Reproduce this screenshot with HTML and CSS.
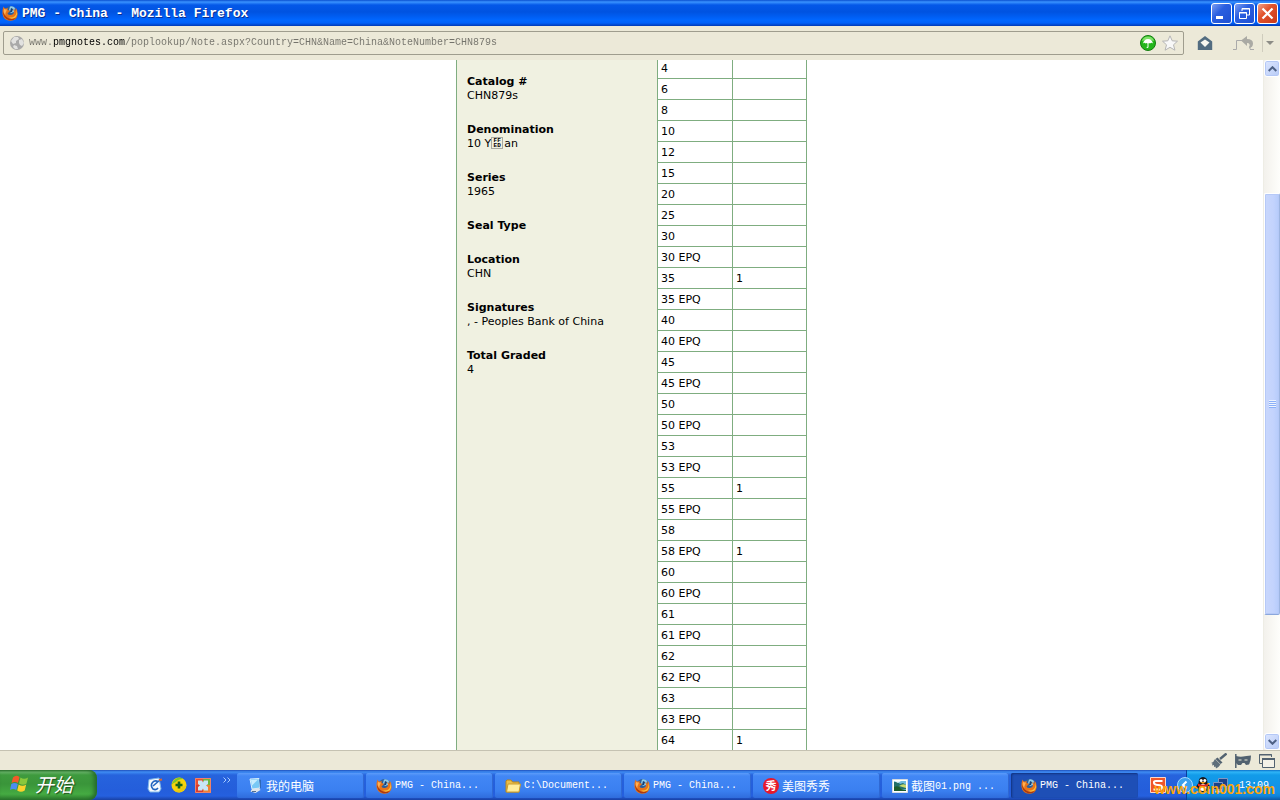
FILE: index.html
```html
<!DOCTYPE html>
<html lang="en">

<head>
    <meta charset="utf-8">
    <title>PMG - China - Mozilla Firefox</title>
    <link rel="stylesheet" href="styles.css">
</head>

<body>
<svg class="sprite" width="0" height="0" aria-hidden="true">
    <symbol id="firefox" viewBox="0 0 16 16">
        <circle cx="8.500" cy="7.500" r="6.500" fill="#2a5f9e"/>
        <path d="M8 1.500q3-1 5 1.500l-1 4-3 1-2-3z" fill="#8ecbe8"/>
        <path d="M9 3l2 1-1 3-2 0z" fill="#163e74"/>
        <path d="M1.500 1.500Q2 3 3 3.500L6 3.200 5.500 4.800 8 6 6.500 7.500 5.500 8.500Q6.500 10.500 9 10Q12 9.500 12 6.500L11 4Q13 5 13.500 6L13.500 2.500Q16 5 15.700 9Q15 15.500 8.500 15.800Q1.500 15.500.500 9Q0 5 1.500 1.500z" fill="#e8741a"/>
        <path d="M14 4Q15.500 8 13 11Q10 13.500 6.500 12Q10 15 13.500 12.500Q16.500 9 14 4z" fill="#fbc43a"/>
        <path d="M1 6Q.500 13 7 15.200Q12 16 14.500 12.500Q10 15 6 13Q2 11 1 6z" fill="#a93a12"/>
        <path d="M2 4Q3.500 4.500 5 4.500L4 7Q3 8 3.500 10Q1 8 2 4z" fill="#ffb052"/>
    </symbol>
</svg>

<header class="titlebar">
    <svg class="icon" viewBox="0 0 16 16"><use href="#firefox"/></svg>
    <h1>PMG - China - Mozilla Firefox</h1>
    <div class="window-buttons">
        <button type="button" aria-label="Minimize">
            <svg viewBox="0 0 19 19"><path d="M4 12h7v3H4z" fill="#fff"/></svg>
        </button>
        <button type="button" aria-label="Restore">
            <svg viewBox="0 0 19 19" fill="none" stroke="#fff"><path d="M7 7V4.500h7.500V11H12M7 5h8" /><path d="M4.500 8.500h7v6h-7zM4 9h8"/></svg>
        </button>
        <button type="button" class="close" aria-label="Close">
            <svg viewBox="0 0 19 19"><path d="M4.500 4.500l10 10m0-10l-10 10" stroke="#fff" stroke-width="2.200"/></svg>
        </button>
    </div>
</header>

<nav class="toolbar">
    <div class="address">
        <svg class="icon" viewBox="0 0 16 16">
            <circle cx="8" cy="8" r="7" fill="#a9a9a9"/>
            <path d="M2 6l3-4 4 0 1 2-3 2 0 2-3 1zM10 5l3-1 2 4-2 3-2-1-1-2zM5 10l3 1 1 3-3 0-2-2z" fill="#e2e2e0"/>
        </svg>
        <input class="url" type="text" aria-label="Address" value="www.pmgnotes.com/poplookup/Note.aspx?Country=CHN&amp;Name=China&amp;NoteNumber=CHN879s">
        <button type="button" class="plain" aria-label="Page helper">
            <svg class="icon" viewBox="0 0 16 16">
                <circle cx="8" cy="8" r="7.500" fill="#24b51c" stroke="#147d10"/>
                <path d="M2 6Q3 1.500 8 1.500T14 6Q8 4 2 6z" fill="#7fe268"/>
                <path d="M3 8.500Q4 4 8 4T13 8.500Q11.500 7 10 8.500Q9 7.500 8.500 8.500V12q-.500 1.500-2 .500v-.800q1 .500 1-.200V8.500Q6.500 7.500 5.500 8.500Q4.500 7 3 8.500z" fill="#fff"/>
            </svg>
        </button>
        <button type="button" class="plain" aria-label="Bookmark this page">
            <svg class="icon" viewBox="0 0 16 16"><path d="M8 .800l2.200 5 5.300.400-4 3.600 1.400 5.400L8 12.300l-4.900 2.900 1.400-5.400-4-3.600 5.300-.400z" fill="#f8f8f8" stroke="#b5b5b5"/></svg>
        </button>
    </div>
    <button type="button" class="plain home" aria-label="Home">
        <svg class="icon" viewBox="0 0 16 16"><path d="M8 1L.800 6.500V15h14.400V6.500z" fill="#526c80"/><path d="M3.500 7.500L8 4.500l4.500 3L8 12z" fill="#f8f7f0"/></svg>
    </button>
    <button type="button" class="plain undo" aria-label="Undo close tab">
        <svg width="22" height="16" viewBox="0 0 22 16"><path d="M0 14.500h3.500v-9H10M17 14.500h4M17 11v3" fill="none" stroke="#aaa"/><path d="M8 5.500l6-4.500v3q6 0 6 4.500 0 4-4 4.500 2-5-2-5v3z" fill="#aaaaa4"/></svg>
    </button>
    <button type="button" class="plain drop" aria-label="Recently closed">
        <svg width="8" height="4" viewBox="0 0 8 4"><path d="M0 0h8L4 4z" fill="#8c8c86"/></svg>
    </button>
</nav>

<main class="view">
    <div class="page">
        <div class="note">
            <dl class="details">
                <div>
                    <dt>Catalog #</dt>
                    <dd>CHN879s</dd>
                </div>
                <div>
                    <dt>Denomination</dt>
                    <dd>10 Y<span class="hexbox">FF<br>ED</span>an</dd>
                </div>
                <div>
                    <dt>Series</dt>
                    <dd>1965</dd>
                </div>
                <div>
                    <dt>Seal Type</dt>
                    <dd></dd>
                </div>
                <div>
                    <dt>Location</dt>
                    <dd>CHN</dd>
                </div>
                <div>
                    <dt>Signatures</dt>
                    <dd>, - Peoples Bank of China</dd>
                </div>
                <div>
                    <dt>Total Graded</dt>
                    <dd>4</dd>
                </div>
            </dl>
            <table class="grades">
                <tr><td>4</td><td></td></tr>
                <tr><td>6</td><td></td></tr>
                <tr><td>8</td><td></td></tr>
                <tr><td>10</td><td></td></tr>
                <tr><td>12</td><td></td></tr>
                <tr><td>15</td><td></td></tr>
                <tr><td>20</td><td></td></tr>
                <tr><td>25</td><td></td></tr>
                <tr><td>30</td><td></td></tr>
                <tr><td>30 EPQ</td><td></td></tr>
                <tr><td>35</td><td>1</td></tr>
                <tr><td>35 EPQ</td><td></td></tr>
                <tr><td>40</td><td></td></tr>
                <tr><td>40 EPQ</td><td></td></tr>
                <tr><td>45</td><td></td></tr>
                <tr><td>45 EPQ</td><td></td></tr>
                <tr><td>50</td><td></td></tr>
                <tr><td>50 EPQ</td><td></td></tr>
                <tr><td>53</td><td></td></tr>
                <tr><td>53 EPQ</td><td></td></tr>
                <tr><td>55</td><td>1</td></tr>
                <tr><td>55 EPQ</td><td></td></tr>
                <tr><td>58</td><td></td></tr>
                <tr><td>58 EPQ</td><td>1</td></tr>
                <tr><td>60</td><td></td></tr>
                <tr><td>60 EPQ</td><td></td></tr>
                <tr><td>61</td><td></td></tr>
                <tr><td>61 EPQ</td><td></td></tr>
                <tr><td>62</td><td></td></tr>
                <tr><td>62 EPQ</td><td></td></tr>
                <tr><td>63</td><td></td></tr>
                <tr><td>63 EPQ</td><td></td></tr>
                <tr><td>64</td><td>1</td></tr>
            </table>
        </div>
    </div>
    <div class="scrollbar">
        <button type="button" aria-label="Scroll up">
            <svg width="9" height="6" viewBox="0 0 9 6"><path d="M.700 5l3.800-3.800L8.300 5" fill="none" stroke="#4d6185" stroke-width="2"/></svg>
        </button>
        <div class="track">
            <div class="thumb"><span class="grip"></span></div>
        </div>
        <button type="button" aria-label="Scroll down">
            <svg width="9" height="6" viewBox="0 0 9 6"><path d="M.700 1l3.800 3.800L8.300 1" fill="none" stroke="#4d6185" stroke-width="2"/></svg>
        </button>
    </div>
</main>

<div class="addonbar">
    <button type="button" class="plain" aria-label="Clean up">
        <svg class="icon" viewBox="0 0 16 16"><path d="M15.500.500L9 6" stroke="#526270" stroke-width="2.400"/><path d="M6.500 4.500l5 5-2 1.500-5-5z" fill="#526270"/><path d="M4 6l5.500 5.500Q8 14 5 15.500L4.500 13.500 3 14v-2l-2 .500.500-2L0 10Q3 9 4 6z" fill="#5f6f7b"/></svg>
    </button>
    <button type="button" class="plain" aria-label="Private browsing">
        <svg class="icon" viewBox="0 0 16 16"><path d="M.800 1v14" stroke="#526270" stroke-width="1.500"/><path d="M1 3q4 1 7 .500T16 2.500Q16 8 14 11.500L11 12 9.500 10H7.500L6 12H3L1 10z" fill="#526270"/><path d="M3.500 6.500h3v1h-3zM9.500 6.500h3v1h-3z" fill="#ece9d8"/></svg>
    </button>
    <button type="button" class="plain" aria-label="Windows">
        <svg class="icon" viewBox="0 0 16 16" fill="none" stroke="#526270"><path d="M3 10.500H.500v-9h12V4M0 2h13"/><path d="M3.500 5.500h12v9h-12z" fill="#f4f2e8"/><path d="M3 6h13" stroke-width="2"/></svg>
    </button>
</div>

<footer class="taskbar">
    <button type="button" class="start">
        <svg width="20" height="18" viewBox="0 0 20 18">
            <path d="M3 2.500Q6-.500 9.500 2L8 8Q5 6 1.500 8z" fill="#f25a29"/>
            <path d="M10.500 2.500Q14 5 18 2.500L16.500 8.500Q13 11 9 8.500z" fill="#8ac83c"/>
            <path d="M1.300 9Q4.500 7 7.800 9L6.300 15Q3 13 0 15z" fill="#4c8df0"/>
            <path d="M8.700 9.500Q12.500 12 16.200 9.500L14.700 15.500Q11 18 7.200 15.500z" fill="#fcd22c"/>
        </svg>
        <span>开始</span>
    </button>
    <div class="quick">
        <button type="button" class="plain" aria-label="Show desktop">
            <svg class="icon" viewBox="0 0 16 16"><path d="M2 2.500l10-1.500 2 11-2 3H3L1 12z" fill="#f6fbff" stroke="#7fb6e8"/><path d="M11.500 5Q8 2.500 5.500 5.500T6 12q3 1.500 5-1M6 9l7-6" fill="none" stroke="#2467c0" stroke-width="1.600"/><path d="M12 3l3-.500" stroke="#d46a35" stroke-width="2"/></svg>
        </button>
        <button type="button" class="plain" aria-label="360">
            <svg class="icon" viewBox="0 0 16 16"><circle cx="8" cy="8" r="7.500" fill="#f8d30b"/><path d="M.500 8Q2 2 8 .500 11 .500 12 2 7 2 5 5 2 6 .500 8z" fill="#7cc62c"/><path d="M15.500 8q-2 6-7 7.500-4 0-6-2.500 6 2 9-3z" fill="#e9c80f"/><path d="M8 4.500v7M4.500 8h7" stroke="#17631a" stroke-width="2.600"/></svg>
        </button>
        <button type="button" class="plain" aria-label="Picture viewer">
            <svg class="icon" viewBox="0 0 16 16"><path d="M0 1h8v7H0z" fill="#e84e32"/><path d="M8 1h8v7H8z" fill="#6cb83c"/><path d="M0 8h8v8H0z" fill="#d83d30"/><path d="M8 8h8v8H8z" fill="#ee8133"/><path d="M3 3.500h4l1 2 1-2h4V7L11 8.500l2 1.500v3.500H9l-1-2-1 2H3V10l2-1.500L3 7z" fill="#c9e6f6"/><path d="M.500 1.500h15v14H.500z" fill="none" stroke="#f0826a"/></svg>
        </button>
        <button type="button" class="plain more" aria-label="More">
            <svg width="8" height="6" viewBox="0 0 8 6" fill="none" stroke="#a9ccff"><path d="M.500.500L3 3 .500 5.500M4.500.500L7 3 4.500 5.500"/></svg>
        </button>
    </div>
    <div class="tasks">
        <button type="button" class="task">
            <svg class="icon" viewBox="0 0 16 16"><path d="M3 1l9-.500 1 9.500-8 1z" fill="#78c8f5" stroke="#d9effb"/><path d="M4 2l7-.500-6 6z" fill="#c7ecff"/><path d="M5 11l7-1 1.500 2-5 3-5-1.500z" fill="#dfe4ea"/><path d="M12 1l2 1 0 8-1 0z" fill="#2f68b5"/><path d="M5 13.500h4" stroke="#536e91"/></svg>
            <span class="cjk">我的电脑</span>
        </button>
        <button type="button" class="task">
            <svg class="icon" viewBox="0 0 16 16"><use href="#firefox"/></svg>
            <span>PMG - China...</span>
        </button>
        <button type="button" class="task">
            <svg class="icon" viewBox="0 0 16 16"><path d="M1 14V3l1-1h4l1.500 2H14v10z" fill="#e9bd48" stroke="#b98518"/><path d="M1.500 14L3 6h12.500L14 14z" fill="#ffed9c" stroke="#c99c2e"/></svg>
            <span>C:\Document...</span>
        </button>
        <button type="button" class="task">
            <svg class="icon" viewBox="0 0 16 16"><use href="#firefox"/></svg>
            <span>PMG - China...</span>
        </button>
        <button type="button" class="task">
            <span class="xiu">秀</span>
            <span class="cjk">美图秀秀</span>
        </button>
        <button type="button" class="task">
            <svg class="icon" viewBox="0 0 16 16"><path d="M.500 1.500h15v13H.500z" fill="#fff" stroke="#d6dce2"/><path d="M2 3h12v10H2z" fill="#70bbdf"/><path d="M2 4q4-1 6 2l3-1 3 2v4H2z" fill="#226f69"/><path d="M7 8q4-3 7-1v3z" fill="#c8d86e"/><path d="M2 9q5-2 7 2l5 1v1H2z" fill="#1c5c2b"/><path d="M2 3h7L6 5z" fill="#e6f6fb"/></svg>
            <span><span class="cjk">截图</span>01.png ...</span>
        </button>
        <button type="button" class="task active">
            <svg class="icon" viewBox="0 0 16 16"><use href="#firefox"/></svg>
            <span>PMG - China...</span>
        </button>
    </div>
    <div class="language">
        <svg class="icon" viewBox="0 0 16 16"><path d="M.500.500h15v15H.500z" fill="#f0562a" stroke="#fcd7c8"/><path d="M12.500 4H6Q3.500 4 4 6t4 2 4 2-2 2.500H3.500" fill="none" stroke="#fff" stroke-width="2"/></svg>
    </div>
    <div class="tray">
        <button type="button" class="plain expand" aria-label="Show hidden icons">
            <svg class="icon" viewBox="0 0 16 16"><circle cx="8" cy="8" r="7.500" fill="#3ba0ee" stroke="#a6daff"/><path d="M9.500 4.500L6 8l3.500 3.500" fill="none" stroke="#fff" stroke-width="2"/></svg>
        </button>
        <svg class="icon" viewBox="0 0 16 16"><path d="M3.500 6Q3.500 0 8 0t4.500 6q3.500 4 2.500 6l-2.500-1q0 4-4.500 4t-4.500-4L1 12q-1-2 2.500-6z" fill="#17191d"/><ellipse cx="8" cy="10.500" rx="3.500" ry="3.500" fill="#fff"/><circle cx="6.200" cy="3.500" r="1.500" fill="#fff"/><circle cx="9.800" cy="3.500" r="1.500" fill="#fff"/><path d="M5 5h6L8 7z" fill="#f6a21a"/><path d="M3 6.500q5 2.500 10 0V9q-5 2-10 0z" fill="#e32a20"/><path d="M2.500 15.500q2-2.500 5 0zM8.500 15.500q2.500-2.500 5 0z" fill="#f6a21a"/></svg>
        <svg class="icon" viewBox="0 0 16 16"><path d="M5.500 1.500h9v8h-9z" fill="#1d4187" stroke="#7f97c4"/><path d="M.500 5.500h9v7h-9z" fill="#1d4187" stroke="#7f97c4"/><path d="M2 14.500h6" stroke="#c5ccd8" stroke-width="2"/></svg>
        <span class="clock">13:09</span>
    </div>
</footer>
<div class="watermark">www.coin001.com</div>
</body>
</html>
```
FILE: styles.css
```css
* {
    box-sizing: border-box;
}
body, html {
    padding: 0;
    margin: 0;
    height: 100%;
}
body {
    display: flex;
    flex-direction: column;
    overflow: hidden;
    background-color: #ece9d8;
    font-family: "Liberation Mono", "Noto Sans CJK SC", monospace;
    font-size: 10px;
}
button {
    font: inherit;
    padding: 0;
    border: 0;
}
svg {
    display: block;
    flex: none;
}
.sprite {
    position: absolute;
}
.icon {
    width: 16px;
    height: 16px;
}
.plain {
    background: none;
    display: flex;
    align-items: center;
}

/* title bar */
.titlebar {
    flex: none;
    height: 26px;
    padding: 0 2px;
    display: flex;
    align-items: center;
    gap: 4px;
    background: linear-gradient(#0a50d0 0, #3a93ff 2px, #0458e8 5px, #0053e1 12px, #0066ff 20px, #0060f8 23px, #0038b5 26px);
}
.titlebar h1 {
    flex: 1;
    margin: 0;
    font-size: 13px;
    color: #fff;
    text-shadow: 1px 1px #0a2f92;
}
.window-buttons {
    display: flex;
    gap: 2px;
}
.window-buttons button {
    width: 21px;
    height: 21px;
    border: 1px solid #fff;
    border-radius: 3px;
    background: linear-gradient(135deg, #7d9ef2, #2a5fe0 40%, #1f50d2);
}
.window-buttons .close {
    background: linear-gradient(135deg, #f0a088, #e2532c 40%, #c8391a);
}

/* address bar */
.toolbar {
    flex: none;
    height: 34px;
    padding: 0 6px 1px 3px;
    display: flex;
    align-items: center;
}
.address {
    flex: 1;
    height: 24px;
    padding: 0 5px;
    display: flex;
    align-items: center;
    gap: 6px;
    border: 1px solid #9f9d8e;
    border-radius: 2px;
}
.url {
    flex: 1;
    min-width: 0;
    margin-left: -2px;
    padding: 0;
    border: 0;
    font: inherit;
    line-height: 16px;
    color: transparent;
    background: linear-gradient(90deg, #74736b 4ch, #000 4ch, #000 16ch, #74736b 16ch);
    -webkit-background-clip: text;
    background-clip: text;
    caret-color: #000;
}
.url:focus {
    outline: none;
}
.home {
    margin-left: 13px;
}
.undo {
    margin-left: 20px;
}
.drop {
    height: 18px;
    margin-left: 7px;
    padding-left: 3px;
    border-left: 1px solid #cfccbd;
}

/* page */
.view {
    flex: 1;
    min-height: 0;
    display: flex;
    background-color: #fff;
}
.page {
    flex: 1;
    overflow: hidden;
    font-family: Verdana, "DejaVu Sans", sans-serif;
    font-size: 11px;
    line-height: 14px;
    color: #000;
}
.note {
    width: 351px;
    margin: -3px auto 0;
    display: flex;
}
.details {
    width: 201px;
    margin: 0;
    padding: 18px 10px;
    display: flex;
    flex-direction: column;
    gap: 20px;
    background-color: #f0f1e1;
    border-left: 1px solid #7fad80;
}
.details dt {
    font-weight: bold;
}
.details dd {
    margin: 0;
    white-space: nowrap;
}
.hexbox {
    display: inline-block;
    width: 12px;
    height: 12px;
    margin-right: 1px;
    border: 1px solid #a9a9a0;
    font: bold 6px/5px "Liberation Mono", monospace;
    text-align: center;
    vertical-align: top;
}
.grades {
    width: 150px;
    table-layout: fixed;
    border-collapse: collapse;
}
.grades td {
    height: 21px;
    padding: 4px 3px 2px;
    border: 1px solid #7fad80;
}
.grades td:first-child {
    width: 75px;
}

/* scrollbar */
.scrollbar {
    width: 17px;
    display: flex;
    flex-direction: column;
    border-left: 1px solid #eeede5;
    background: linear-gradient(90deg, #f3f1ec, #fefefb);
}
.scrollbar button {
    height: 17px;
    display: flex;
    align-items: center;
    justify-content: center;
    border: 1px solid #fff;
    border-radius: 3px;
    background: linear-gradient(135deg, #dce6ff, #b8cbf6);
    box-shadow: inset 0 0 0 1px #b4c8f6;
}
.track {
    flex: 1;
    display: flex;
    flex-direction: column;
}
.track::before {
    content: "";
    flex: 116 0 0;
}
.track::after {
    content: "";
    flex: 118 0 0;
}
.thumb {
    flex: 422 0 0;
    display: flex;
    align-items: center;
    justify-content: center;
    border: 1px solid #fff;
    border-right-color: #9db5e2;
    border-bottom-color: #8ba7dc;
    border-radius: 2px;
    background: linear-gradient(90deg, #c9d7fc, #c3d3fd 60%, #b5cbfb);
    box-shadow: inset 0 0 0 1px #b6c9f7;
}
.grip {
    width: 7px;
    height: 8px;
    background: repeating-linear-gradient(#eef4fe 0, #eef4fe 1px, #8cb0f8 1px, #8cb0f8 2px);
}

/* add-on bar */
.addonbar {
    flex: none;
    height: 20px;
    padding-right: 5px;
    display: flex;
    align-items: center;
    justify-content: flex-end;
    gap: 8px;
    border-top: 1px solid #c5c2b2;
}

/* taskbar */
.taskbar {
    flex: none;
    height: 30px;
    display: flex;
    color: #fff;
    background: linear-gradient(#1f4fbc 0, #3f8cf3 2px, #2663dd 5px, #245edb 20px, #2560df 26px, #1941a5 30px);
}
.start {
    width: 97px;
    padding: 0 0 2px 10px;
    display: flex;
    align-items: center;
    gap: 5px;
    color: #fff;
    font: italic 19px/26px "Noto Sans CJK SC", sans-serif;
    text-shadow: 1px 1px 1px #1d4b1c;
    background: linear-gradient(#2f7430 0, #6bb86b 2px, #3e9a3e 5px, #3a953a 14px, #45ab42 24px, #2c7a2d 30px);
    border-radius: 0 8px 8px 0;
    box-shadow: inset -3px 0 4px #256a2a;
}
.quick {
    width: 140px;
    padding-left: 50px;
    display: flex;
    align-items: center;
    gap: 8px;
}
.quick .more {
    height: 24px;
    margin-left: 4px;
    align-items: flex-start;
    padding-top: 4px;
}
.tasks {
    flex: 1;
    min-width: 0;
    padding: 3px 0 2px;
    display: flex;
    gap: 2px;
}
.task {
    flex: 0 1 127px;
    min-width: 0;
    padding-left: 10px;
    display: flex;
    align-items: center;
    gap: 3px;
    color: #fff;
    white-space: nowrap;
    background: linear-gradient(#5b9bfa 0, #4287f5 3px, #3a7ff0 18px, #2f6cdc 25px);
    border-radius: 2px;
    box-shadow: inset -1px 0 #2f68d4;
}
.task.active {
    background: #1e4fb6;
    box-shadow: inset 1px 1px 2px #12337f;
}
.cjk {
    font-family: "Noto Sans CJK SC", sans-serif;
    font-size: 12px;
    line-height: 16px;
}
.task .cjk {
    vertical-align: middle;
}
.xiu {
    width: 16px;
    height: 16px;
    border-radius: 8px;
    background-color: #e8192c;
    font: bold 11px/15px "Noto Sans CJK SC", sans-serif;
    text-align: center;
}
.language {
    padding: 7px 20px 0 0;
}
.tray {
    width: 94px;
    display: flex;
    align-items: center;
    gap: 2px;
    background: linear-gradient(#0c6fc9 0, #2fb5f7 2px, #129be9 5px, #1290e5 22px, #1085dc 26px, #0b58a8 30px);
    box-shadow: inset 1px 0 #0b3f9b;
}
.expand {
    margin-left: -9px;
}
.clock {
    margin-left: 8px;
}
.watermark {
    position: absolute;
    right: 5px;
    bottom: 3px;
    font: bold 14px/16px "Liberation Sans", sans-serif;
    color: #fda50c;
}
```
